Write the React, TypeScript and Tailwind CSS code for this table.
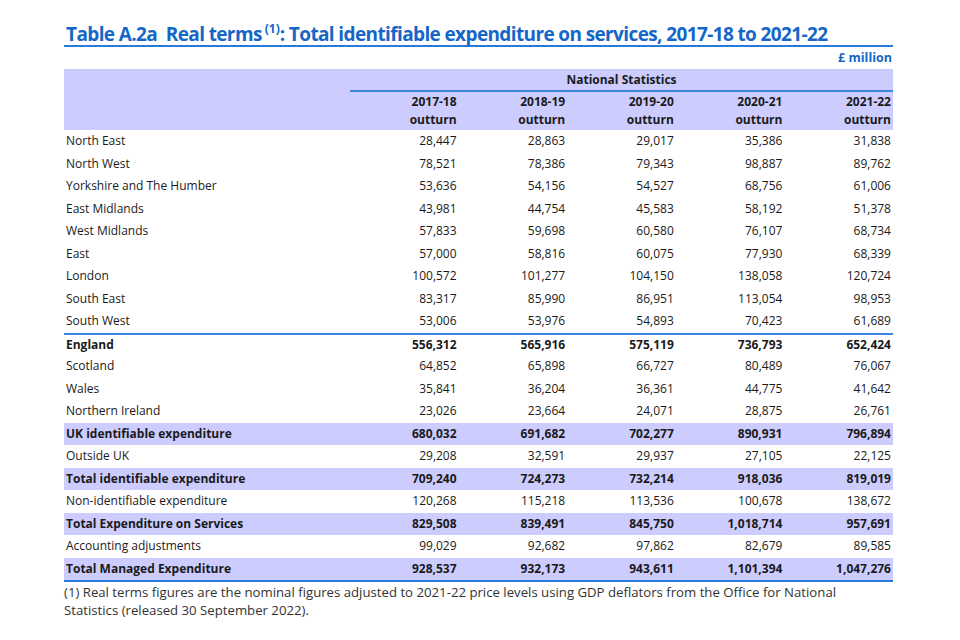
import React from "react";

type Row = { label: string; v: string[]; kind?: "bold" | "band" };

const rows: Row[] = [
  { label: "North East", v: ["28,447", "28,863", "29,017", "35,386", "31,838"] },
  { label: "North West", v: ["78,521", "78,386", "79,343", "98,887", "89,762"] },
  { label: "Yorkshire and The Humber", v: ["53,636", "54,156", "54,527", "68,756", "61,006"] },
  { label: "East Midlands", v: ["43,981", "44,754", "45,583", "58,192", "51,378"] },
  { label: "West Midlands", v: ["57,833", "59,698", "60,580", "76,107", "68,734"] },
  { label: "East", v: ["57,000", "58,816", "60,075", "77,930", "68,339"] },
  { label: "London", v: ["100,572", "101,277", "104,150", "138,058", "120,724"] },
  { label: "South East", v: ["83,317", "85,990", "86,951", "113,054", "98,953"] },
  { label: "South West", v: ["53,006", "53,976", "54,893", "70,423", "61,689"] },
  { label: "England", v: ["556,312", "565,916", "575,119", "736,793", "652,424"], kind: "bold" },
  { label: "Scotland", v: ["64,852", "65,898", "66,727", "80,489", "76,067"] },
  { label: "Wales", v: ["35,841", "36,204", "36,361", "44,775", "41,642"] },
  { label: "Northern Ireland", v: ["23,026", "23,664", "24,071", "28,875", "26,761"] },
  { label: "UK identifiable expenditure", v: ["680,032", "691,682", "702,277", "890,931", "796,894"], kind: "band" },
  { label: "Outside UK", v: ["29,208", "32,591", "29,937", "27,105", "22,125"] },
  { label: "Total identifiable expenditure", v: ["709,240", "724,273", "732,214", "918,036", "819,019"], kind: "band" },
  { label: "Non-identifiable expenditure", v: ["120,268", "115,218", "113,536", "100,678", "138,672"] },
  { label: "Total Expenditure on Services", v: ["829,508", "839,491", "845,750", "1,018,714", "957,691"], kind: "band" },
  { label: "Accounting adjustments", v: ["99,029", "92,682", "97,862", "82,679", "89,585"] },
  { label: "Total Managed Expenditure", v: ["928,537", "932,173", "943,611", "1,101,394", "1,047,276"], kind: "band" },
];

const years = ["2017-18", "2018-19", "2019-20", "2020-21", "2021-22"];

export default function App() {
  return (
    <div
      className="w-[960px] h-[640px] bg-white text-[#1a1a1a] pt-[21px] pl-[64px]"
      style={{ fontFamily: '"Open Sans", "Noto Sans", sans-serif' }}
    >
      <div className="w-[829px]">
        <div className="border-b-2 border-[#2a7ad8] pl-[2px] h-[26px]">
          <h1 className="text-[19px] leading-[26px] font-bold text-[#1466c8] whitespace-nowrap tracking-[-0.62px]">
            Table A.2a&nbsp;&nbsp;Real terms
            <span className="text-[12px] relative top-[-8px] ml-[3px] tracking-normal">(1)</span>: Total identifiable
            expenditure on services, 2017-18 to 2021-22
          </h1>
        </div>
        <div className="h-[22px] flex items-center justify-end pr-[1px] text-[12.5px] font-bold text-[#1466c8]">
          £ million
        </div>
        <div className="bg-[#ccccff] flex">
          <div className="w-[286px]" />
          <div className="flex-1 flex flex-col">
            <div className="h-[23px] flex items-center justify-center text-[12px] font-bold border-b-2 border-[#3d86df]">
              National Statistics
            </div>
            <div className="flex text-[12px] font-bold h-[38px]">
              {years.map((y) => (
                <div key={y} className="flex-1 flex flex-col items-end pr-[2px] leading-[18px] pt-[1px]">
                  <span>{y}</span>
                  <span>outturn</span>
                </div>
              ))}
            </div>
          </div>
        </div>
        <div className="border-b-2 border-[#2a7ad8]">
          {rows.map((r) => {
            const bold = r.kind === "bold" || r.kind === "band";
            return (
              <div
                key={r.label}
                className={
                  "flex h-[22.5px] items-center text-[12px] " +
                  (r.kind === "band" ? "bg-[#ccccff] " : "") +
                  (bold ? "font-bold " : "") +
                  (r.label === "England" ? "border-t-2 border-[#3d86df] " : "")
                }
              >
                <div className="w-[286px] pl-[2px] whitespace-nowrap">{r.label}</div>
                {r.v.map((v, i) => (
                  <div key={i} className="flex-1 text-right pr-[2px]">
                    {v}
                  </div>
                ))}
              </div>
            );
          })}
        </div>
        <p className="mt-[1px] text-[13.2px] leading-[18px] text-[#333333] whitespace-nowrap">
          (1) Real terms figures are the nominal figures adjusted to 2021-22 price levels using GDP deflators from the Office for National
          <br />
          Statistics (released 30 September 2022).
        </p>
      </div>
    </div>
  );
}
